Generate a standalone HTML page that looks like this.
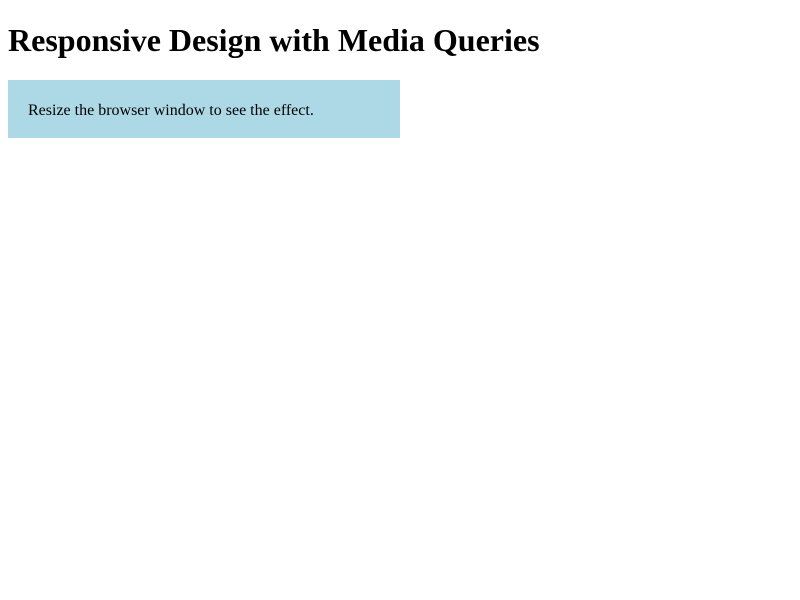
<!DOCTYPE html>
<html>
<head>
<style>
body { margin: 8px; font-family: "Liberation Serif", serif; background: #fff; color: #000; }
h1 { font-size: 32px; margin: 20.5px 0; line-height: 39px; }
.box { background: lightblue; width: 352px; padding: 21px 20px 17px; font-size: 16px; line-height: 20px; }
</style>
</head>
<body>
<h1>Responsive Design with Media Queries</h1>
<div class="box">Resize the browser window to see the effect.</div>
</body>
</html>
